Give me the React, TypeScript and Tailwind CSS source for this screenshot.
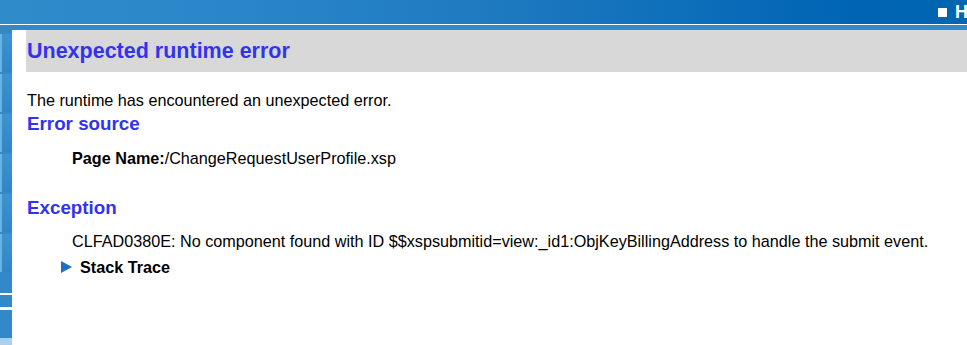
export default function App() {
  const font = { fontFamily: '"Liberation Sans", Arial, sans-serif' };
  return (
    <div className="flex h-[345px] w-[967px] flex-col overflow-hidden bg-white" style={font}>
      {/* banner */}
      <div className="flex h-[24px] shrink-0 items-center justify-end overflow-hidden bg-[linear-gradient(90deg,#2f8bca_0%,#2a86c8_25%,#1f7ac0_50%,#0e6fba_70%,#0064b5_88%,#0066b0_100%)]">
        <div className="flex w-[29px] items-center gap-[8px] overflow-hidden whitespace-nowrap text-[18px] leading-[20px] font-bold text-white">
          <span className="block h-[9px] w-[9px] shrink-0 bg-white" />
          <span>H</span>
        </div>
      </div>
      <div className="h-px shrink-0 bg-white" />
      <div className="h-[5px] shrink-0 bg-[#3189c9]" />

      <div className="flex flex-1">
        {/* side strip */}
        <div className="flex w-[12px] shrink-0 flex-col bg-[#3189c9]">
          <div className="h-[4px]" />
          {[0, 1, 2, 3, 4, 5].map((i) => (
            <div
              key={i}
              className="mb-[2px] h-[38px] border-l-2 border-[#6fb0de] bg-[linear-gradient(180deg,#3d94d0,#2e86c6)]"
            />
          ))}
          <div className="flex-1" />
          <div className="h-[2px] bg-white" />
          <div className="h-[12px]" />
          <div className="h-[3px] bg-white" />
          <div className="h-[28px]" />
          <div className="h-[7px] bg-[#a9d0ee]" />
        </div>

        {/* content */}
        <div className="flex-1 pl-[14px]">
          <div className="flex h-[42px] items-center bg-[#d8d8d8] pl-[1px]">
            <h1 className="text-[21.5px] font-bold text-[#3333ee]">Unexpected runtime error</h1>
          </div>
          <p className="mt-[19px] pl-[1px] text-[16.2px] leading-[18px] text-black">
            The runtime has encountered an unexpected error.
          </p>
          <h2 className="mt-[4px] pl-[1px] text-[18.8px] leading-[22px] font-bold text-[#3333ee]">Error source</h2>
          <div className="mt-[14px] pl-[46px] text-[16.2px] leading-[18px] text-black">
            <span className="font-bold">Page Name:</span>/ChangeRequestUserProfile.xsp
          </div>
          <h2 className="mt-[30px] pl-[1px] text-[18.8px] leading-[22px] font-bold text-[#3333ee]">Exception</h2>
          <div className="mt-[13px] pl-[46px] text-[16.2px] leading-[18px] text-black">
            CLFAD0380E: No component found with ID $$xspsubmitid=view:_id1:ObjKeyBillingAddress to handle the submit event.
          </div>
          <div className="mt-[8px] flex items-center gap-[8px] pl-[35px] text-[16.2px] leading-[18px] font-bold text-black">
            <svg width="11" height="12" viewBox="0 0 11 12" className="shrink-0">
              <polygon points="0,0 11,6 0,12" fill="#1f6ec4" />
            </svg>
            <span>Stack Trace</span>
          </div>
        </div>
      </div>
    </div>
  );
}
